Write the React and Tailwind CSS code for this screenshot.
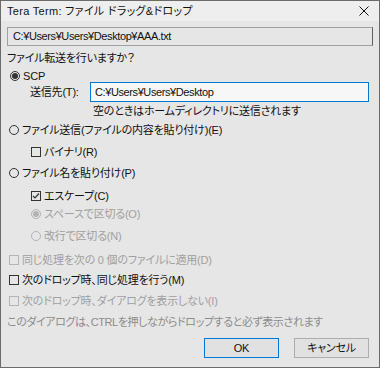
import React from 'react'

const font = "font-['Liberation_Sans','Noto_Sans_CJK_JP',sans-serif] [font-feature-settings:'palt']"

function Radio({ checked, disabled }) {
  const ring = disabled ? 'border-[#b4b4b4]' : 'border-[#333333]'
  const dot = disabled ? 'bg-[#b4b4b4]' : 'bg-[#333333]'
  return (
    <span className={`w-[10px] h-[10px] rounded-full border ${ring} flex items-center justify-center shrink-0`}>
      {checked && <span className={`w-[6px] h-[6px] rounded-full ${dot}`} />}
    </span>
  )
}

function Check({ checked, disabled }) {
  const box = disabled ? 'border-[#b4b4b4]' : 'border-[#333333]'
  return (
    <span className={`w-[10px] h-[10px] border ${box} flex items-center justify-center shrink-0`}>
      {checked && (
        <svg width="8" height="8" viewBox="0 0 8 8">
          <path d="M1 4 L3 6 L7 1.5" fill="none" stroke="#333333" strokeWidth="1.2" />
        </svg>
      )}
    </span>
  )
}

function Row({ className = '', indent = false, children }) {
  return (
    <div className={`flex items-center h-[16px] gap-[3px] ${indent ? 'pl-[30px]' : 'pl-[8px]'} ${className}`}>
      {children}
    </div>
  )
}

export default function App() {
  return (
    <div className={`w-[380px] h-[368px] bg-[#e6e6e6] border border-[#6b6b6b] text-[11px] tracking-[-0.2px] text-[#111111] flex flex-col overflow-hidden ${font}`}>
      {/* Title bar */}
      <div className="h-[20px] bg-[#eeeeee] flex items-center justify-between pl-[6px] pr-[10px] shrink-0">
        <span className="text-[11px] tracking-[0.3px]">Tera Term: ファイル ドラッグ&ドロップ</span>
        <svg width="10" height="10" viewBox="0 0 10 10">
          <path d="M0.5 0.5 L9.5 9.5 M9.5 0.5 L0.5 9.5" stroke="#111111" strokeWidth="1" />
        </svg>
      </div>

      {/* Read-only path */}
      <div className="mt-[6px] mx-[6px] h-[19px] border border-[#a0a0a0] border-r-[#5f5f5f] flex items-center pl-[5px] tracking-[-0.4px] shrink-0">
        C:¥Users¥Users¥Desktop¥AAA.txt
      </div>

      <div className="mt-[4px] h-[16px] pl-[6px] flex items-center">ファイル転送を行いますか？</div>

      <div className="mt-[4px] h-[12px] pl-[9px] flex items-center gap-[3px]">
        <Radio checked />
        <span>SCP</span>
      </div>

      <div className="h-[20px] flex items-center pl-[29px] pr-[10px]">
        <span className="w-[60px] shrink-0">送信先(T):</span>
        <div className="flex-1 h-[20px] bg-[#f7f7f7] border border-[#0078d7] flex items-center pl-[4px] tracking-[-0.4px]">
          C:¥Users¥Users¥Desktop
        </div>
      </div>

      <div className="mt-[1px] h-[16px] pl-[92px] flex items-center">空のときはホームディレクトリに送信されます</div>

      <Row className="mt-[3px]">
        <Radio />
        <span>ファイル送信(ファイルの内容を貼り付け)(E)</span>
      </Row>

      <Row className="mt-[6px]" indent>
        <Check />
        <span>バイナリ(R)</span>
      </Row>

      <Row className="mt-[5px]">
        <Radio />
        <span>ファイル名を貼り付け(P)</span>
      </Row>

      <Row className="mt-[7px]" indent>
        <Check checked />
        <span>エスケープ(C)</span>
      </Row>

      <Row className="mt-[2px] text-[#a0a0a0]" indent>
        <Radio checked disabled />
        <span>スペースで区切る(O)</span>
      </Row>

      <Row className="mt-[6px] text-[#a0a0a0]" indent>
        <Radio disabled />
        <span>改行で区切る(N)</span>
      </Row>

      <Row className="mt-[8px] text-[#a0a0a0]">
        <Check disabled />
        <span>同じ処理を次の 0 個のファイルに適用(D)</span>
      </Row>

      <Row className="mt-[4px]">
        <Check />
        <span>次のドロップ時、同じ処理を行う(M)</span>
      </Row>

      <Row className="mt-[5px] text-[#a0a0a0]">
        <Check disabled />
        <span>次のドロップ時、ダイアログを表示しない(I)</span>
      </Row>

      <div className="mt-[5px] h-[16px] pl-[6px] flex items-center text-[#8c8c8c] tracking-[-0.4px]">
        このダイアログは、CTRLを押しながらドロップすると必ず表示されます
      </div>

      <div className="mt-[8px] flex justify-end gap-[15px] pr-[10px]">
        <button className="w-[75px] h-[20px] bg-[#e1e1e1] border border-[#0078d7] flex items-center justify-center">
          OK
        </button>
        <button className="w-[75px] h-[20px] bg-[#e1e1e1] border border-[#adadad] flex items-center justify-center">
          キャンセル
        </button>
      </div>
    </div>
  )
}
